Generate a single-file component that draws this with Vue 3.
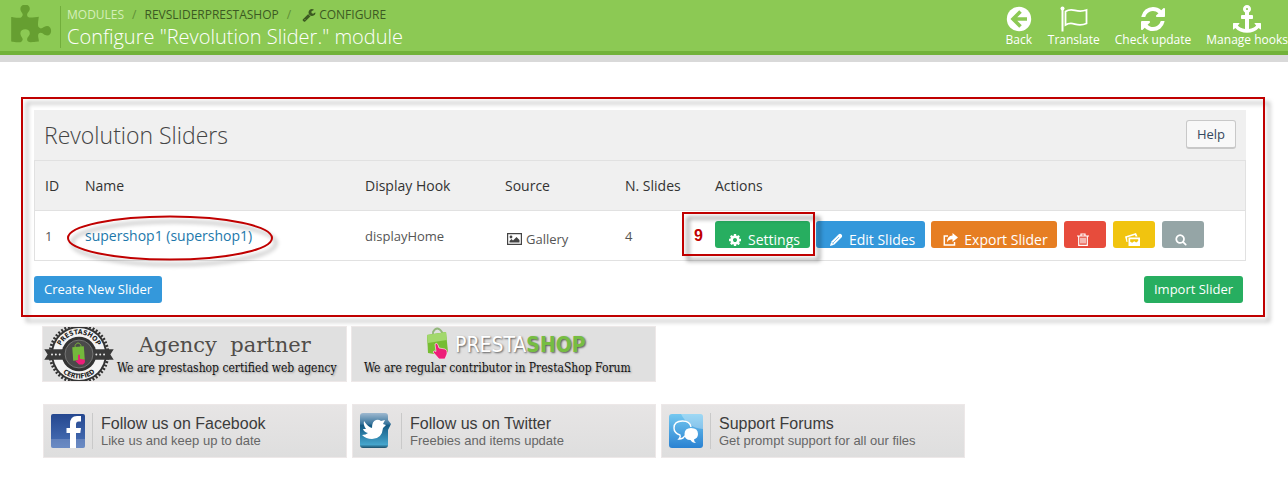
<script setup>
const icons = {
  puzzle: 'M1755 1082q0 81-44.5 135t-123.5 54q-41 0-77.5-17.5t-59-38-56.5-38-71-17.5q-110 0-110 124 0 39 16 115t15 115v5q-22 0-33 1-34 3-97.5 11.5t-115.5 13.5-98 5q-61 0-103-26.5t-42-83.5q0-37 17.5-71t38-56.5 38-59 17.5-77.5q0-79-54-123.5t-135-44.5q-84 0-143 45.5t-59 127.5q0 43 15 83t33.5 64.5 33.5 53 15 50.5q0 45-46 89-37 35-117 35-95 0-245-24-9-2-27.5-4t-27.5-4l-13-2q-1 0-3-1-2 0-2-1v-1024q2 1 17.5 3.5t34 5 21.5 3.5q150 24 245 24 80 0 117-35 46-44 46-89 0-22-15-50.5t-33.5-53-33.5-64.5-15-83q0-82 59-127.5t144-45.5q80 0 134 44.5t54 123.5q0 41-17.5 77.5t-38 59-38 56.5-17.5 71q0 57 42 83.5t103 26.5q64 0 180-15t163-17v2q-1 2-3.5 17.5t-5 34-3.5 21.5q-24 150-24 245 0 80 35 117 44 46 89 46 22 0 50.5-15t53-33.5 64.5-33.5 83-15q82 0 127.5 59t45.5 143z',
  wrench: 'M448 1472q0-26-19-45t-45-19-45 19-19 45 19 45 45 19 45-19 19-45zm644-420l-682 682q-37 37-90 37-52 0-91-37l-106-108q-38-36-38-90 0-53 38-91l681-681q39 98 114.5 173.5t173.5 114.5zm634-435q0 39-23 106-47 134-164.5 217.5t-258.5 83.5q-185 0-316.5-131.5t-131.5-316.5 131.5-316.5 316.5-131.5q58 0 121.5 16.5t107.5 46.5q16 11 16 28t-16 28l-293 169v224l193 107q5-3 79-48.5t135.5-81 70.5-35.5q15 0 23.5 10t8.5 25z',
  refresh: 'M1639 1056q0 5-1 7-64 268-268 434.5t-478 166.5q-146 0-282.5-55t-243.5-157l-129 129q-19 19-45 19t-45-19-19-45v-448q0-26 19-45t45-19h448q26 0 45 19t19 45-19 45l-137 137q71 66 161 102t187 36q134 0 250-65t186-179q11-17 53-117 8-23 30-23h192q13 0 22.5 9.5t9.5 22.5zm25-800v448q0 26-19 45t-45 19h-448q-26 0-45-19t-19-45 19-45l138-138q-148-137-349-137-134 0-250 65t-186 179q-11 17-53 117-8 23-30 23h-199q-13 0-22.5-9.5t-9.5-22.5v-7q65-268 270-434.5t480-166.5q146 0 284 55.5t245 156.5l130-129q19-19 45-19t45 19 19 45z',
  anchor: 'M960 256q0-26-19-45t-45-19-45 19-19 45 19 45 45 19 45-19 19-45zm832 928v352q0 22-20 30-8 2-12 2-13 0-23-9l-93-93q-119 143-318.5 226.5t-429.5 83.5-429.5-83.5-318.5-226.5l-93 93q-9 9-23 9-4 0-12-2-20-8-20-30v-352q0-14 9-23t23-9h352q22 0 30 20 8 19-7 35l-100 100q67 91 189.5 153.5t271.5 82.5v-647h-192q-26 0-45-19t-19-45v-128q0-26 19-45t45-19h192v-163q-58-34-93-92.5t-35-128.5q0-106 75-181t181-75 181 75 75 181q0 70-35 128.5t-93 92.5v163h192q26 0 45 19t19 45v128q0 26-19 45t-45 19h-192v647q149-20 271.5-82.5t189.5-153.5l-100-100q-15-16-7-35 8-20 30-20h352q14 0 23 9t9 23z',
  cog: 'M1152 896q0-106-75-181t-181-75-181 75-75 181 75 181 181 75 181-75 75-181zm512-109v222q0 12-8 23t-20 13l-185 28q-19 54-39 91 35 50 107 138 10 12 10 25t-9 23q-27 37-99 108t-94 71q-12 0-26-9l-138-108q-44 23-91 38-16 136-29 186-7 28-36 28h-222q-14 0-24.5-8.5t-11.5-21.5l-28-184q-49-16-90-37l-141 107q-10 9-25 9-14 0-25-11-126-114-165-168-7-10-7-23 0-12 8-23 15-21 51-66.5t54-70.5q-27-50-41-99l-183-27q-13-2-21-12.5t-8-23.5v-222q0-12 8-23t19-13l186-28q14-46 39-92-40-57-107-138-10-12-10-24 0-10 9-23 26-36 98.5-107.5t94.5-71.5q13 0 26 10l138 107q44-23 91-38 16-136 29-186 7-28 36-28h222q14 0 24.5 8.5t11.5 21.5l28 184q49 16 90 37l142-107q9-9 24-9 13 0 25 10 129 119 165 170 7 8 7 22 0 12-8 23-15 21-51 66.5t-54 70.5q26 50 41 98l183 28q13 2 21 12.5t8 23.5z',
  search: 'M1216 832q0-185-131.5-316.5t-316.5-131.5-316.5 131.5-131.5 316.5 131.5 316.5 316.5 131.5 316.5-131.5 131.5-316.5zm512 832q0 52-38 90t-90 38q-54 0-90-38l-343-342q-179 124-399 124-143 0-273.5-55.5t-225-150-150-225-55.5-273.5 55.5-273.5 150-225 225-150 273.5-55.5 273.5 55.5 225 150 150 225 55.5 273.5q0 220-124 399l343 343q37 37 37 90z',
}
</script>

<template>
  <header class="topbar">
    <svg class="puzzle" viewBox="0 0 1792 1792" aria-hidden="true"><path :d="icons.puzzle" /></svg>
    <div class="heading">
      <nav class="crumbs" aria-label="Breadcrumb">
        <a href="#" class="root">Modules</a>
        <span class="slash">/</span>
        <a href="#">revsliderprestashop</a>
        <span class="slash">/</span>
        <a href="#" class="current"><svg class="wrench" viewBox="0 0 1792 1792" aria-hidden="true"><path :d="icons.wrench" /></svg>Configure</a>
      </nav>
      <h1>Configure "Revolution Slider." module</h1>
    </div>
    <nav class="tools" aria-label="Module tools">
      <a href="#">
        <svg viewBox="0 0 28 28" aria-hidden="true">
          <circle cx="14" cy="14" r="12.2" fill="#fff" />
          <path d="M15.500 6.500L8 14l7.500 7.500M9 14h13" fill="none" stroke="#8cc954" stroke-width="3.600" />
        </svg>
        Back
      </a>
      <a href="#">
        <svg viewBox="0 0 28 28" aria-hidden="true" fill="none" stroke="#fff">
          <circle cx="2.500" cy="3.500" r="2" fill="#fff" stroke="none" />
          <path d="M2.500 4v22.500" stroke-width="2" />
          <path d="M5.500 6.500c8-5 10 2.500 21-1.500v13.500c-11 4.500-13-3.500-21 1.500z" stroke-width="1.800" />
        </svg>
        Translate
      </a>
      <a href="#">
        <svg viewBox="0 0 1792 1792" aria-hidden="true"><path :d="icons.refresh" fill="#fff" /></svg>
        Check update
      </a>
      <a href="#">
        <svg viewBox="0 0 1792 1792" aria-hidden="true"><path :d="icons.anchor" fill="#fff" /></svg>
        Manage hooks
      </a>
    </nav>
  </header>

  <main>
    <section class="frame">
      <div class="panel-head">
        <h2>Revolution Sliders</h2>
        <button type="button" class="help">Help</button>
      </div>
      <table>
        <thead>
          <tr>
            <th class="c-id">ID</th>
            <th class="c-name">Name</th>
            <th class="c-hook">Display Hook</th>
            <th class="c-source">Source</th>
            <th class="c-count">N. Slides</th>
            <th>Actions</th>
          </tr>
        </thead>
        <tbody>
          <tr>
            <td>1</td>
            <td>
              <span class="circled">
                <a href="#" class="name">supershop1 (supershop1)</a>
                <svg class="ellipse" viewBox="0 0 208 46" preserveAspectRatio="none" aria-hidden="true">
                  <ellipse cx="104" cy="23" rx="102" ry="21.500" fill="none" stroke="#c00000" stroke-width="2" />
                </svg>
              </span>
            </td>
            <td>displayHome</td>
            <td>
              <span class="source">
                <svg viewBox="0 0 15 12" aria-hidden="true">
                  <path d="M0 0h15v12H0zM1.200 1.200v9.600h12.600V1.200z" fill="#444" fill-rule="evenodd" />
                  <circle cx="4" cy="4" r="1.400" fill="#444" />
                  <path d="M2.500 9.500V8l2-2 1.500 1.500L9.500 4l3 3v2.500z" fill="#444" />
                </svg>
                Gallery
              </span>
            </td>
            <td>4</td>
            <td>
              <div class="actions">
                <span class="marked">
                  <button type="button" class="act green">
                    <svg viewBox="0 0 1792 1792" aria-hidden="true"><path :d="icons.cog" fill="#fff" /></svg>Settings
                  </button>
                  <b class="step">9</b>
                </span>
                <button type="button" class="act blue">
                  <svg viewBox="0 0 14 14" aria-hidden="true">
                    <path d="M1 13l1.200-4.200L9.500 1.500c1-1 2.200-.8 3 0s.9 2 0 3L5.200 11.800z" fill="#fff" />
                    <path d="M4 10l6-6M2.500 9l2.500 2.500" stroke="#3498db" stroke-width=".6" />
                  </svg>Edit Slides
                </button>
                <button type="button" class="act orange">
                  <svg class="wide" viewBox="0 0 15 13" aria-hidden="true">
                    <path d="M5 3H1.300v9h10.200V9" fill="none" stroke="#fff" stroke-width="1.500" />
                    <path d="M9.500 0L15 4.500 9.500 9V6.300C7 6.300 5.500 7 4 9.300 4 5.500 6 2.700 9.500 2.600z" fill="#fff" />
                  </svg>Export Slider
                </button>
                <button type="button" class="act red" aria-label="Delete">
                  <svg viewBox="0 0 12 13" aria-hidden="true" fill="none" stroke="#fff">
                    <path d="M0 3h12M4 3V1h4v2M1.700 3v9.300h8.600V3M4 4.800v5.700M6 4.800v5.700M8 4.800v5.700" stroke-width="1.200" />
                  </svg>
                </button>
                <button type="button" class="act yellow" aria-label="Duplicate">
                  <svg class="wide" viewBox="0 0 15 13" aria-hidden="true">
                    <path d="M1.500 9L0 3.500 11 0l1.500 3.500h-2L10 2 2 4.600 2.500 9z" fill="#fff" />
                    <path d="M3.500 4.500H15V13H3.500zM5.200 6.300v2.500l2 1 2-1.500 2 1.200 2-1.400V6.300z" fill="#fff" fill-rule="evenodd" />
                  </svg>
                </button>
                <button type="button" class="act grey" aria-label="Preview">
                  <svg viewBox="0 0 1792 1792" aria-hidden="true"><path :d="icons.search" fill="#fff" /></svg>
                </button>
              </div>
            </td>
          </tr>
        </tbody>
      </table>
      <div class="panel-foot">
        <button type="button" class="btn blue">Create New Slider</button>
        <button type="button" class="btn green">Import Slider</button>
      </div>
    </section>

    <div class="banners partners">
      <a href="#" class="banner agency">
        <svg class="seal" viewBox="0 0 72 56" aria-hidden="true">
          <defs>
            <path id="arc-top" d="M15.500 28a20.500 20.500 0 0 1 41 0" />
            <path id="arc-bottom" d="M10.500 28a25.500 25.500 0 0 0 51 0" />
          </defs>
          <circle cx="36" cy="28" r="30" fill="none" stroke="#333" stroke-width="3" stroke-dasharray="2 1.800" />
          <circle cx="36" cy="28" r="29" fill="#333" />
          <circle cx="36" cy="28" r="27" fill="#f4f4f4" />
          <circle cx="36" cy="28" r="18" fill="#333" />
          <path d="M0 23h72l-3.500 5.500L72 34H0l3.500-5.500z" fill="#3a3a3a" />
          <circle cx="36" cy="28" r="14.500" fill="#4a4a4a" stroke="#999" stroke-width=".6" />
          <g fill="#eee">
            <circle cx="8" cy="28.500" r="1" /><circle cx="12" cy="28.500" r="1" /><circle cx="16" cy="28.500" r="1" />
            <circle cx="54" cy="28.500" r="1" /><circle cx="58" cy="28.500" r="1" /><circle cx="62" cy="28.500" r="1" />
          </g>
          <text class="seal-text"><textPath href="#arc-top" startOffset="50%" text-anchor="middle">PRESTASHOP</textPath></text>
          <text class="seal-text"><textPath href="#arc-bottom" startOffset="50%" text-anchor="middle">CERTIFIED</textPath></text>
          <path d="M32 21v-2q3-5 6 0v2" fill="none" stroke="#7db53c" />
          <path d="M29 21l12-1 1 14-12 1z" fill="#74b83c" />
          <path d="M35 29q1-1 2 0v4l5 1q1 3-2 5h-4l-4-4 3-.5z" fill="#ed1e79" />
        </svg>
        <span class="agency-copy">
          <span class="agency-title">Agency&nbsp; partner</span>
          <span class="serif-note">We are prestashop certified web agency</span>
        </span>
      </a>
      <a href="#" class="banner contributor">
        <span class="logo">
          <svg viewBox="0 0 22 32" aria-hidden="true">
            <path d="M6 9V5q4-7 9 0v3" fill="none" stroke="#92b77a" stroke-width="1.800" />
            <path d="M0 8l19-3 2 20-8 3-12-2z" fill="#76bd32" />
            <path d="M0 8l19-3 .8 8-19 3z" fill="#a2d86c" />
            <path d="M8 17q2-2 3 1l1 3 6 1q3 1 2 5l-2 5h-6l-6-7q1-2 3-.5z" fill="#ed1e79" stroke="#fff" stroke-width=".6" />
          </svg>
          <span class="word">PRESTA<span>SHOP</span></span>
        </span>
        <span class="serif-note">We are regular contributor in PrestaShop Forum</span>
      </a>
    </div>

    <div class="banners socials">
      <a href="#" class="banner social">
        <svg viewBox="0 0 36 36" aria-hidden="true">
          <defs><linearGradient id="fb" x2="0" y2="1"><stop stop-color="#25478f" /><stop offset="1" stop-color="#4a72b8" /></linearGradient></defs>
          <rect x="1" y="1" width="34" height="34" rx="2" fill="url(#fb)" />
          <path d="M1 26h34v7q0 2-2 2H3q-2 0-2-2z" fill="#fff" opacity=".18" />
          <path d="M20 35V20h-3.500v-5H20v-4q0-8 7-8h4v5.500h-2.500q-2.500 0-2.500 3V15h5l-.7 5H26v15z" fill="#fff" />
        </svg>
        <span class="copy"><strong>Follow us on Facebook</strong><small>Like us and keep up to date</small></span>
      </a>
      <a href="#" class="banner social">
        <svg viewBox="0 0 36 36" aria-hidden="true">
          <defs><linearGradient id="tw" x2="0" y2="1"><stop stop-color="#9fb9d0" /><stop offset=".3" stop-color="#3c779e" /><stop offset=".36" stop-color="#155a83" /><stop offset=".9" stop-color="#45a5cc" /><stop offset="1" stop-color="#1c4e69" /></linearGradient></defs>
          <path d="M4 0h22q3 0 3 3v4l3 4-3 6v15q0 3-3 3H4q-3 0-3-3V3q0-3 3-3z" fill="url(#tw)" />
          <path d="M5 8q4 6 8 7 0-7 4-8 3-.6 5 1l4-1-2 4 3 1-3 3q-1 11-11 11-6 0-10-4 4 0 6-2-4-1-5-4h3q-3-4-2-8z" fill="#fff" />
        </svg>
        <span class="copy"><strong>Follow us on Twitter</strong><small>Freebies and items update</small></span>
      </a>
      <a href="#" class="banner social">
        <svg viewBox="0 0 36 36" aria-hidden="true">
          <defs><linearGradient id="fo" x2="0" y2="1"><stop stop-color="#74c8f0" /><stop offset="1" stop-color="#2a82d2" /></linearGradient></defs>
          <rect x="1" y="1" width="34" height="34" rx="3" fill="url(#fo)" />
          <path d="M13 1h19q3 0 3 3v12Q20 15 13 1z" fill="#fff" opacity=".3" />
          <path d="M19 22q-3 1-4 3-2 1-4 1 2-2 1-4Q6 20 6 15q0-7 8.500-7 7.500 0 8.500 6" fill="none" stroke="#fff" stroke-width="1.400" />
          <path d="M23 15q7 0 7 6 0 4-4 5.500 0 2 2 3.500-4 0-5.500-3-6 0-6-6t6.500-6z" fill="#fff" />
        </svg>
        <span class="copy"><strong>Support Forums</strong><small>Get prompt support for all our files</small></span>
      </a>
    </div>
  </main>
</template>

<style>
body {
  background: #fff;
  font-family: "Open Sans", "Noto Sans", sans-serif;
}
</style>

<style scoped>
* { box-sizing: border-box; }
a { text-decoration: none; }
svg { display: block; flex: none; }
button { font-family: inherit; cursor: pointer; }

.topbar {
  display: flex;
  align-items: flex-start;
  height: 62px;
  background: linear-gradient(#8cc954 51px, #72b239 51px 55px, #d9d9d9 55px);
}
.puzzle { width: 43px; height: 43px; margin: 5px 0 0 9px; fill: #669f31; }
.heading {
  height: 42px;
  margin: 6px 0 0 8px;
  padding-left: 6px;
  border-left: 1px solid #72ae3c;
}
.crumbs {
  display: flex;
  align-items: center;
  gap: 8px;
  height: 17px;
  font-size: 12px;
  text-transform: uppercase;
}
.crumbs a { display: flex; align-items: center; color: #3c5a22; }
.crumbs .root { color: #d5efba; }
.crumbs .current { padding-left: 3px; }
.slash { color: #5f8f37; }
.wrench { width: 14px; height: 14px; margin-right: 3px; fill: #3c5a22; }
h1 {
  margin: 0;
  font-size: 20px;
  font-weight: 300;
  line-height: 28px;
  color: #fff;
  white-space: nowrap;
}
.tools { display: flex; gap: 15px; margin-left: auto; }
.tools a {
  display: flex;
  flex-direction: column;
  align-items: center;
  padding-top: 5px;
  font-size: 12px;
  line-height: 14px;
  color: #fff;
  white-space: nowrap;
}
.tools svg { width: 28px; height: 28px; }

.frame {
  position: relative;
  margin: 35px 23px 0 21px;
  padding: 13px 19px 14px 13px;
}
.frame::after {
  content: "";
  position: absolute;
  inset: 0;
  border: 2px solid #c00000;
  filter: drop-shadow(5px 5px 2px rgba(0, 0, 0, .3));
  pointer-events: none;
}
.panel-head {
  display: flex;
  align-items: center;
  justify-content: space-between;
  height: 50px;
  padding: 0 10px 1px;
  background: #f0f0f0;
}
h2 { margin: 0; font-size: 23px; font-weight: 300; color: #444; }
.help {
  height: 29px;
  padding: 0 10px;
  border: 1px solid #c8c8c8;
  border-bottom-width: 2px;
  border-radius: 3px;
  background: #f8f8f8;
  font-size: 13px;
  color: #34495e;
}
table {
  width: 100%;
  border: 1px solid #e1e1e1;
  border-collapse: separate;
  border-spacing: 0;
  table-layout: fixed;
}
th, td {
  height: 50px;
  padding: 0 10px;
  font-size: 14px;
  font-weight: 400;
  text-align: left;
  white-space: nowrap;
}
th { height: 49px; background: #f0f0f0; color: #333; }
td { border-top: 1px solid #e1e1e1; font-size: 13px; color: #555; }
.c-id { width: 40px; }
.c-name { width: 280px; }
.c-hook { width: 140px; }
.c-source { width: 120px; }
.c-count { width: 90px; }
.circled { position: relative; display: inline-block; }
.name { font-size: 14px; color: #1c78ab; }
.ellipse {
  position: absolute;
  top: -11px;
  left: -19px;
  width: 208px;
  height: 46px;
  overflow: visible;
  filter: drop-shadow(4px 5px 2px rgba(0, 0, 0, .35));
  pointer-events: none;
}
.source { display: flex; align-items: center; gap: 4px; padding: 6px 0 0 2px; }
.source svg { width: 15px; height: 12px; }
.actions { display: flex; gap: 7px; padding-bottom: 2px; }
.marked { position: relative; display: flex; }
.marked + .act, .blue + .orange { margin-left: -1px; }
.marked::after {
  content: "";
  position: absolute;
  top: -9px;
  left: -33px;
  right: -5px;
  bottom: -8px;
  border: 2px solid #c00000;
  filter: drop-shadow(5px 5px 2px rgba(0, 0, 0, .5));
  pointer-events: none;
}
.step {
  position: absolute;
  top: 6px;
  left: -21px;
  font: bold 16px/18px "Liberation Sans", Arial, sans-serif;
  color: #c00000;
}
.act {
  display: flex;
  align-items: center;
  gap: 6px;
  height: 27px;
  padding: 10px 10px 0 13px;
  border: 0;
  border-radius: 3px;
  overflow: hidden;
  font-size: 14px;
  line-height: 17px;
  color: #fff;
  white-space: nowrap;
}
.act svg { width: 14px; height: 14px; }
.act svg.wide { width: 15px; height: 13px; }
.green { background: #27ae60; }
.blue { background: #3498db; }
.orange { background: #e67e22; }
.red { background: #e74c3c; }
.yellow { background: #f1c40f; }
.grey { background: #95a5a6; }
.act.orange { padding: 10px 9px 0 12px; }
.act.red, .act.yellow, .act.grey { justify-content: center; width: 42px; padding: 10px 3px 0 0; }
.act.red svg, .act.grey svg { width: 12px; height: 13px; }
.panel-foot { display: flex; justify-content: space-between; padding: 15px 3px 0 0; }
.btn {
  height: 27px;
  padding: 0 10px 1px;
  border: 0;
  border-radius: 3px;
  font-size: 13px;
  color: #fff;
}

.banners { display: flex; flex-wrap: wrap; }
.partners { gap: 4px; margin: 9px 0 0 42px; }
.socials { gap: 5px; margin: 22px 0 0 43px; }
.banner {
  display: flex;
  width: 305px;
  height: 56px;
  border: 1px solid #ede8e8;
  background: #e0e0e0;
  white-space: nowrap;
}
.agency { gap: 2px; }
.seal { width: 72px; height: 54px; }
.seal-text { font: bold 7px "DejaVu Sans Condensed", "DejaVu Sans", sans-serif; fill: #222; }
.agency-copy { display: flex; flex-direction: column; align-items: center; }
.agency-title {
  padding-right: 4px;
  font: 21px/36px "DejaVu Serif", Georgia, serif;
  color: #504d49;
}
.serif-note {
  font: 12px/10px "DejaVu Serif Condensed", "DejaVu Serif", Georgia, serif;
  color: #111;
  text-shadow: 1px 1px 2px rgba(0, 0, 0, .3);
}
.contributor { flex-direction: column; padding-left: 12px; }
.logo { display: flex; gap: 6px; height: 36px; padding-left: 63px; }
.logo svg { width: 22px; height: 32px; }
.word {
  font: 21px/36px "DejaVu Sans Condensed", "DejaVu Sans", sans-serif;
  color: #fff;
  text-shadow: 1px 1px 2px rgba(0, 0, 0, .6);
}
.word span { font-weight: 700; color: #76bd43; }
.social {
  align-items: center;
  width: 304px;
  height: 54px;
  padding-left: 6px;
  background: linear-gradient(#e7e5e5, #dedede);
}
.social svg { width: 36px; height: 36px; }
.copy {
  display: flex;
  flex-direction: column;
  margin-left: 6px;
  padding: 2px 0 0 8px;
  border-left: 1px solid #c9c9c9;
  font-family: "Liberation Sans", Arial, sans-serif;
}
.copy strong { font-size: 16px; font-weight: 400; line-height: 18px; color: #3c3c3c; }
.copy small { font-size: 13px; line-height: 16px; color: #666; }
</style>
